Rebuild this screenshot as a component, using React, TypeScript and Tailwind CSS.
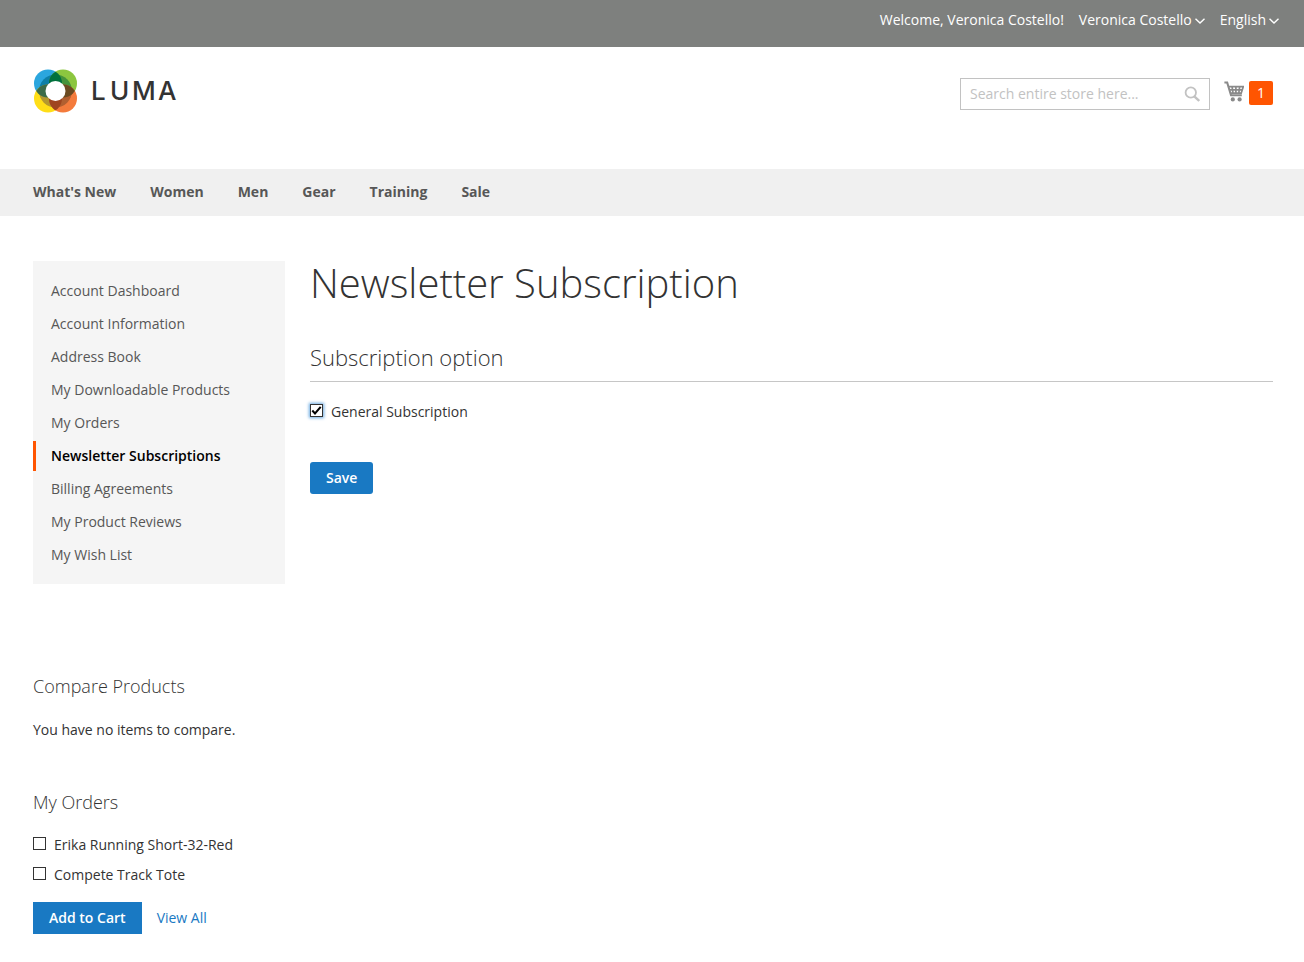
import { useState } from "react";
import type { ReactNode } from "react";

const navItems = ["What's New", "Women", "Men", "Gear", "Training", "Sale"];

const accountItems = [
  "Account Dashboard",
  "Account Information",
  "Address Book",
  "My Downloadable Products",
  "My Orders",
  "Newsletter Subscriptions",
  "Billing Agreements",
  "My Product Reviews",
  "My Wish List",
];

const recentOrders = ["Erika Running Short-32-Red", "Compete Track Tote"];

function Logo() {
  return (
    <svg width="146" height="45" viewBox="0 0 146 45" role="img" aria-label="Luma">
      <defs>
        <clipPath id="tl"><circle cx="15" cy="14.5" r="14" /></clipPath>
        <clipPath id="tr"><circle cx="30" cy="14.5" r="14" /></clipPath>
        <clipPath id="bl"><circle cx="15" cy="29.5" r="14" /></clipPath>
        <clipPath id="br"><circle cx="30" cy="29.5" r="14" /></clipPath>
      </defs>
      <circle cx="15" cy="14.5" r="14" fill="#2ba6de" />
      <circle cx="30" cy="14.5" r="14" fill="#8cc63f" />
      <circle cx="15" cy="29.5" r="14" fill="#ffde17" />
      <circle cx="30" cy="29.5" r="14" fill="#f47b3c" />
      <circle cx="22.5" cy="22" r="16.5" fill="#0d7fa6" clipPath="url(#tl)" />
      <circle cx="22.5" cy="22" r="16.5" fill="#45933b" clipPath="url(#tr)" />
      <circle cx="22.5" cy="22" r="16.5" fill="#b3982f" clipPath="url(#bl)" />
      <circle cx="22.5" cy="22" r="16.5" fill="#b25f30" clipPath="url(#br)" />
      <circle cx="30" cy="14.5" r="14" fill="#00713d" clipPath="url(#tl)" />
      <circle cx="15" cy="29.5" r="14" fill="#3b6b48" clipPath="url(#tl)" />
      <circle cx="30" cy="29.5" r="14" fill="#6b4a20" clipPath="url(#tr)" />
      <circle cx="30" cy="29.5" r="14" fill="#a0451f" clipPath="url(#bl)" />
      <circle cx="22.5" cy="22" r="10" fill="#fff" />
      <g fontFamily="Inter, sans-serif" fontSize="26" fontWeight="500" fill="#333">
        <text x="58" y="31">L</text>
        <text x="77" y="31">U</text>
        <text x="99" y="31">M</text>
        <text x="125" y="31">A</text>
      </g>
    </svg>
  );
}

function Chevron() {
  return (
    <svg className="mt-[2px]" width="10" height="6" viewBox="0 0 10 6" fill="none" stroke="currentColor" strokeWidth="1.4" aria-hidden="true">
      <path d="M0.5 0.7 5 5 9.5 0.7" />
    </svg>
  );
}

function SearchIcon() {
  return (
    <svg width="16" height="16" viewBox="0 0 16 16" fill="none" stroke="currentColor" aria-hidden="true">
      <circle cx="6.8" cy="6.5" r="5.2" strokeWidth="1.8" />
      <path d="M10.3 10.3 15.2 15" strokeWidth="2.4" />
    </svg>
  );
}

function CartIcon() {
  return (
    <svg width="20" height="21" viewBox="0 0 20 21" fill="none" stroke="#8a8a8a" aria-hidden="true">
      <path d="M0.4 1.6H3.2L7 14.2H17.8" strokeWidth="2" />
      <path d="M4.2 5.6H19.3L17.2 12.2H6.2M5 8.9H18.2M8 5.4 9 12.2M11.9 5.4V12.2M15.7 5.4 14.8 12.2" strokeWidth="1.7" />
      <circle cx="8.8" cy="18.4" r="2.1" fill="#8a8a8a" stroke="none" />
      <circle cx="15.6" cy="18.4" r="2.1" fill="#8a8a8a" stroke="none" />
    </svg>
  );
}

function CheckField({ id, focused, initial, children }: { id: string; focused?: boolean; initial?: boolean; children: ReactNode }) {
  const [checked, setChecked] = useState(Boolean(initial));
  return (
    <div className="flex items-center gap-2">
      <span className="relative mb-[3px] flex">
        <input
          id={id}
          type="checkbox"
          checked={checked}
          onChange={(e) => setChecked(e.target.checked)}
          className={
            focused
              ? "size-[13px] appearance-none border border-[#333] bg-white shadow-[0_0_3px_1px_#68a8e0]"
              : "size-[13px] appearance-none border border-[#333] bg-white"
          }
        />
        {checked && (
          <svg className="pointer-events-none absolute inset-0" width="13" height="13" viewBox="0 0 13 13" fill="none" stroke="#000" strokeWidth="2" aria-hidden="true">
            <path d="M2.3 6.5 5 9.5 10.7 2.8" />
          </svg>
        )}
      </span>
      <label htmlFor={id} className="leading-5">{children}</label>
    </div>
  );
}

export default function App() {
  return (
    <div className="min-h-screen bg-white font-['Open_Sans','Noto_Sans',sans-serif] text-sm text-[#333]">
      <header>
        <div className="flex h-[47px] justify-end gap-[15px] bg-[#7e807e] pt-[10px] pr-[25px] leading-5 text-white">
          <span>Welcome, Veronica Costello!</span>
          <button type="button" className="flex h-5 items-center gap-[3px]">
            Veronica Costello
            <Chevron />
          </button>
          <button type="button" className="flex h-5 items-center gap-[3px]">
            English
            <Chevron />
          </button>
        </div>
        <div className="flex h-[122px] items-start justify-between pr-[31px] pl-[33px]">
          <a href="#" className="mt-[22px] block">
            <Logo />
          </a>
          <div className="mt-[31px] flex items-start gap-[14px]">
            <form className="flex h-8 w-[250px] items-center border border-[#c2c2c2] px-[9px]" onSubmit={(e) => e.preventDefault()}>
              <input
                type="text"
                aria-label="Search"
                placeholder="Search entire store here..."
                className="min-w-0 flex-1 leading-5 outline-none placeholder:text-[#c2c2c2]"
              />
              <button type="submit" aria-label="Search" className="text-[#c2c2c2]">
                <SearchIcon />
              </button>
            </form>
            <a href="#" className="mt-[3px] flex items-start gap-[5px]" aria-label="My Cart, 1 item">
              <CartIcon />
              <span className="flex h-6 w-6 items-center justify-center rounded-xs bg-[#ff5501] text-white">1</span>
            </a>
          </div>
        </div>
        <nav className="flex h-[47px] items-center gap-[34px] bg-[#f0f0f0] px-[33px] pb-[2px] font-bold text-[#575757]">
          {navItems.map((item) => (
            <a key={item} href="#">{item}</a>
          ))}
        </nav>
      </header>

      <div className="flex items-start gap-[25px] pt-[45px] pr-[31px] pb-7 pl-[33px]">
        <aside className="w-[252px] shrink-0">
          <nav className="flex flex-col gap-[3px] bg-[#f5f5f5] pt-[15px] pb-[14px] text-[#575757]">
            {accountItems.map((item) =>
              item === "Newsletter Subscriptions" ? (
                <a key={item} href="#" aria-current="page" className="border-l-3 border-[#ff5501] py-[5px] pl-[15px] leading-5 font-semibold text-black">
                  {item}
                </a>
              ) : (
                <a key={item} href="#" className="py-[5px] pl-[18px] leading-5">
                  {item}
                </a>
              ),
            )}
          </nav>

          <section className="mt-[90px]">
            <h2 className="text-lg leading-6 font-light">Compare Products</h2>
            <p className="mt-[22px] leading-5">You have no items to compare.</p>
          </section>

          <section className="mt-[50px]">
            <h2 className="text-lg leading-6 font-light">My Orders</h2>
            <div className="mt-[21px] flex flex-col gap-[10px]">
              {recentOrders.map((item, i) => (
                <CheckField key={item} id={`order-${i}`}>{item}</CheckField>
              ))}
            </div>
            <div className="mt-[17px] flex items-center gap-[15px]">
              <button type="button" className="h-8 bg-[#1979c3] px-4 font-semibold text-white">Add to Cart</button>
              <a href="#" className="text-[#1979c3]">View All</a>
            </div>
          </section>
        </aside>

        <main className="min-w-0 flex-1">
          <h1 className="text-[40px] leading-[44px] font-light">Newsletter Subscription</h1>
          <form onSubmit={(e) => e.preventDefault()}>
            <h2 className="mt-[37px] border-b border-[#c6c6c6] pb-2 text-[22px] leading-[31px] font-light">Subscription option</h2>
            <div className="mt-5">
              <CheckField id="subscription" focused initial>General Subscription</CheckField>
            </div>
            <button type="submit" className="mt-10 h-8 rounded-[3px] bg-[#1979c3] px-4 font-semibold text-white">Save</button>
          </form>
        </main>
      </div>
    </div>
  );
}
